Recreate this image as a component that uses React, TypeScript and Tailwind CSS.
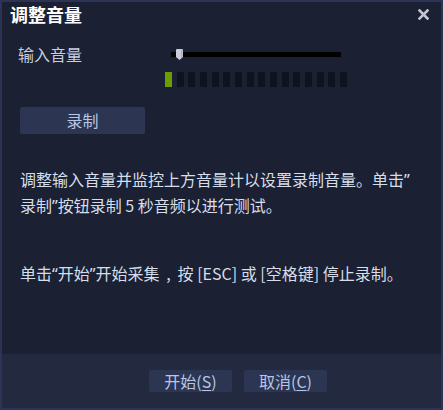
import React from 'react';

const bars = Array.from({ length: 16 }, (_, i) => i);

function CloseIcon() {
  return (
    <svg width="11" height="11" viewBox="0 0 11 11" aria-hidden="true">
      <path d="M1.5 1.5 L9.5 9.5 M9.5 1.5 L1.5 9.5" stroke="#c3c7d3" strokeWidth="2.6" strokeLinecap="square" />
    </svg>
  );
}

function Thumb() {
  return (
    <svg width="7" height="11" viewBox="0 0 7 11" className="absolute left-[5px] top-[-3px]" aria-hidden="true">
      <path d="M0 1 Q0 0 1 0 H6 Q7 0 7 1 V8 L3.5 11 L0 8 Z" fill="#c9cddb" />
      <path d="M5 0.5 H6 Q6.5 0.5 6.5 1 V8 L5 9.3 Z" fill="#a9aec0" />
    </svg>
  );
}

// narrow western quotes, like the original UI font renders them
function Q({ c }: { c: string }) {
  return <span className="font-['Noto_Sans',sans-serif]">{c}</span>;
}

export default function App() {
  return (
    <div className="w-[443px] h-[410px] border-2 border-[#2c3456] bg-[#1b2132] flex flex-col font-['Noto_Sans_CJK_SC','Microsoft_YaHei',sans-serif] select-none">
      <div className="h-[24px] flex items-center justify-between pl-[8px] pr-[12px]">
        <span className="text-[18px] leading-[24px] font-bold text-white">调整音量</span>
        <CloseIcon />
      </div>

      <div className="flex-1 pt-[18px] pl-[16px]">
        <div className="flex items-center h-[20px]">
          <span className="w-[153px] text-[16px] leading-[20px] text-[#c6cfe2]">输入音量</span>
          <div className="relative w-[170px] h-[5px] bg-black">
            <Thumb />
          </div>
        </div>

        <div className="ml-[147px] mt-[8px] w-[182px] h-[15px] flex justify-between">
          {bars.map((i) => (
            <div key={i} className={i === 0 ? 'w-[7px] h-full bg-[#6b9c00]' : 'w-[7px] h-full bg-[#0f1320]'} />
          ))}
        </div>

        <button className="mt-[20px] ml-[2px] w-[125px] h-[27px] rounded-[2px] bg-[#2c3652] text-[16px] leading-[27px] text-[#b7c6e6]">
          录制
        </button>

        <p className="mt-[33px] ml-[2px] text-[16px] leading-[25px] text-[#d6deec] whitespace-nowrap">
          调整输入音量并监控上方音量计以设置录制音量。单击<Q c="”" />
          <br />
          录制<Q c="”" />按钮录制 5 秒音频以进行测试。
        </p>

        <p className="mt-[42px] ml-[2px] text-[16px] leading-[25px] text-[#d6deec] whitespace-nowrap">
          单击<Q c="“" />开始<Q c="”" />开始采集<span className="inline-block w-[18px] text-center">,</span>按 [ESC] 或 [空格键] 停止录制。
        </p>
      </div>

      <div className="h-[54px] bg-[#232a40] flex items-center gap-[12px] pl-[147px]">
        <button className="w-[83px] h-[22px] rounded-[2px] bg-[#2c3652] text-[16px] leading-[22px] text-[#b7c6e6]">
          开始(<span className="underline underline-offset-2">S</span>)
        </button>
        <button className="w-[83px] h-[22px] rounded-[2px] bg-[#2c3652] text-[16px] leading-[22px] text-[#b7c6e6]">
          取消(<span className="underline underline-offset-2">C</span>)
        </button>
      </div>
    </div>
  );
}
